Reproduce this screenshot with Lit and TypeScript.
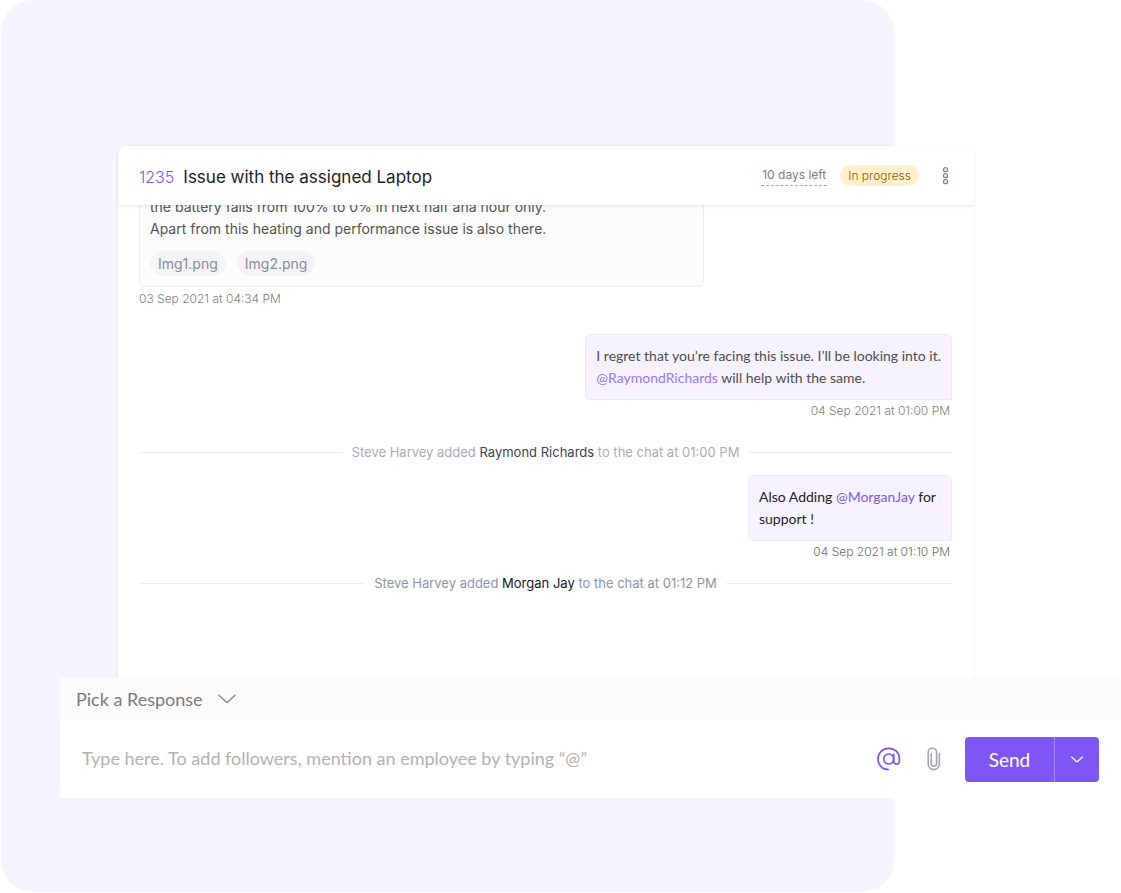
import { LitElement, html, css, svg } from "lit";
import { customElement } from "lit/decorators.js";

const chevron = svg`<path d="M1 1.2 L8.2 8 Q9 8.7 9.8 8 L17 1.2" />`;

@customElement("chat-bubble")
class ChatBubble extends LitElement {
  static properties = { time: { type: String } };
  time = "";

  static styles = css`
    :host {
      display: flex;
      flex-direction: column;
      align-items: flex-end;
      gap: 3px;
      font-family: Lato, sans-serif;
    }
    .bubble {
      box-sizing: border-box;
      min-width: 204px;
      padding: 10px;
      border: 1px solid #ebe9f3;
      border-radius: 6px 6px 0 6px;
      background: #f6f3fe;
      font-size: 14px;
      line-height: 22px;
    }
    .time {
      padding-right: 2px;
      font: 300 12px/16px Inter, sans-serif;
      color: var(--time-color, #808080);
    }
  `;

  render() {
    return html`
      <div class="bubble"><slot></slot></div>
      <time class="time">${this.time}</time>
    `;
  }
}

@customElement("chat-event")
class ChatEvent extends LitElement {
  static styles = css`
    :host {
      display: flex;
      align-items: center;
      gap: 9px;
      font: 13px/18px Inter, sans-serif;
    }
    .rule {
      flex: 1;
      height: 1px;
      background: #ededef;
    }
  `;

  render() {
    return html`<span class="rule"></span><span><slot></slot></span><span class="rule"></span>`;
  }
}

@customElement("app-root")
class AppRoot extends LitElement {
  static styles = css`
    :host {
      display: block;
      font-family: Inter, sans-serif;
      background: #fff;
    }
    .stage {
      display: grid;
      grid-template-columns: minmax(0, 1fr);
    }
    .backdrop,
    .content {
      grid-area: 1 / 1;
    }
    .backdrop {
      margin: 0 227px 1px 1px;
      border-radius: 32px;
      background: #f5f3ff;
    }
    .content {
      padding: 146px 0 95px 60px;
    }
    button,
    select,
    input {
      margin: 0;
      padding: 0;
      border: 0;
      background: none;
      font: inherit;
      color: inherit;
    }
    button {
      cursor: pointer;
    }
    svg {
      display: block;
      fill: none;
      stroke: currentColor;
    }
    a {
      text-decoration: none;
      color: #7f56f5;
    }
    .card {
      margin: 0 147px 0 58px;
      border-radius: 8px 8px 0 0;
      background: #fff;
      box-shadow: 0 0 3px rgba(40, 30, 80, 0.08);
    }
    .head {
      position: relative;
      display: flex;
      align-items: center;
      box-sizing: border-box;
      height: 59px;
      padding: 0 22px 0 21px;
      border-radius: 8px 8px 0 0;
      background: #fff;
      box-shadow: 0 2px 3px rgba(0, 0, 0, 0.07);
    }
    .number,
    .title {
      padding-top: 2px;
      line-height: 24px;
    }
    .number {
      margin-right: 9px;
      font-size: 16px;
      font-weight: 300;
      color: #7f56f5;
    }
    .title {
      flex: 1;
      margin: 0;
      font-size: 17px;
      font-weight: 400;
      color: #1d1d1f;
    }
    .due {
      padding: 0 1px 1px;
      border-bottom: 1px dashed #a3a8b4;
      font-size: 12px;
      line-height: 18px;
      color: #808080;
    }
    .status {
      margin: 0 19px 0 13px;
      padding: 0 8px;
      border-radius: 11px;
      background: #fff0c9;
      font-size: 12px;
      font-weight: 300;
      line-height: 21px;
      color: #8a5c00;
    }
    .more {
      color: #7b8599;
    }
    .thread {
      margin-top: -9px;
      padding: 0 22px 86px 21px;
    }
    .report {
      box-sizing: border-box;
      max-width: 565px;
      padding: 0 10px 10px;
      border: 1px solid #ececee;
      border-top: 0;
      border-radius: 0 0 6px 6px;
      background: #fcfcfc;
      font-size: 14px;
      line-height: 22px;
      color: #535355;
    }
    .report p {
      margin: 0;
    }
    .files {
      display: flex;
      gap: 11px;
      margin-top: 11px;
    }
    .file {
      padding: 0 8px;
      border-radius: 13px;
      background: #f4f4f6;
      line-height: 25px;
      color: #858e9d;
    }
    .sent {
      display: block;
      margin-top: 4px;
      font-size: 12px;
      font-weight: 300;
      line-height: 16px;
      color: #808080;
    }
    .first {
      margin-top: 27px;
      color: #4d4d50;
    }
    .first a {
      color: #977af4;
    }
    .second {
      margin-top: 14px;
      color: #232227;
      --time-color: #6c6c6c;
    }
    .joined {
      margin-top: 24px;
      color: #a6adba;
    }
    .joined b {
      font-weight: 400;
      color: #3f4451;
    }
    .latest {
      margin-top: 14px;
      color: #8b96a8;
    }
    .latest b {
      color: #121826;
    }
    .composer {
      position: relative;
      background: #fff;
      border-radius: 4px 4px 0 0;
      font-family: Lato, sans-serif;
      font-size: 18px;
    }
    .presets {
      display: flex;
      align-items: center;
      height: 42px;
      padding: 0 16px;
      border-radius: 4px 4px 0 0;
      background: #fbfbfb;
    }
    .picker {
      display: grid;
      align-items: center;
      justify-items: end;
      color: #7b89a3;
    }
    .picker select,
    .picker svg {
      grid-area: 1 / 1;
    }
    .picker svg {
      pointer-events: none;
    }
    .picker select {
      appearance: none;
      padding-right: 33px;
      line-height: 24px;
      color: #7b7b7b;
    }
    .entry {
      display: flex;
      align-items: center;
      height: 78px;
      padding: 0 22px;
    }
    .entry input {
      flex: 1;
      min-width: 0;
      padding-bottom: 2px;
      line-height: 24px;
      color: #444;
    }
    .entry input::placeholder {
      color: #b2b2b2;
      opacity: 1;
    }
    .mention {
      margin-right: 26px;
      color: #7f56f5;
    }
    .attach {
      margin-right: 24px;
      color: #a0a7b3;
    }
    .split {
      display: flex;
      height: 45px;
      border-radius: 4px;
      background: #7f56f5;
      color: #fff;
    }
    .send {
      width: 89px;
      font-size: 19px;
    }
    .options {
      display: grid;
      place-items: center;
      width: 45px;
      border-left: 1px solid #a488f8;
    }
  `;

  render() {
    return html`
      <main class="stage">
        <div class="backdrop"></div>
        <div class="content">
          <section class="card">
            <header class="head">
              <span class="number">1235</span>
              <h1 class="title">Issue with the assigned Laptop</h1>
              <span class="due">10 days left</span>
              <span class="status">In progress</span>
              <button class="more" aria-label="More actions">
                <svg width="14" height="18" viewBox="0 0 14 18" stroke-width="1.3">
                  <circle cx="7.5" cy="2.7" r="2" />
                  <circle cx="7.5" cy="8.7" r="2" />
                  <circle cx="7.5" cy="14.7" r="2" />
                </svg>
              </button>
            </header>
            <div class="thread">
              <div class="report">
                <p>the battery falls from 100% to 0% in next half ana hour only.</p>
                <p>Apart from this heating and performance issue is also there.</p>
                <div class="files">
                  <a class="file" href="#img1">Img1.png</a>
                  <a class="file" href="#img2">Img2.png</a>
                </div>
              </div>
              <time class="sent">03 Sep 2021 at 04:34 PM</time>
              <chat-bubble class="first" time="04 Sep 2021 at 01:00 PM"
                >I regret that you’re facing this issue. I’ll be looking into it.<br /><a href="#raymond"
                  >@RaymondRichards</a
                >
                will help with the same.</chat-bubble
              >
              <chat-event class="joined"
                >Steve Harvey added <b>Raymond Richards</b> to the chat at 01:00 PM</chat-event
              >
              <chat-bubble class="second" time="04 Sep 2021 at 01:10 PM"
                >Also Adding <a href="#morgan">@MorganJay</a> for<br />support !</chat-bubble
              >
              <chat-event class="joined latest"
                >Steve Harvey added <b>Morgan Jay</b> to the chat at 01:12 PM</chat-event
              >
            </div>
          </section>
          <section class="composer">
            <div class="presets">
              <div class="picker">
                <select aria-label="Response">
                  <option>Pick a Response</option>
                </select>
                <svg width="18" height="10" viewBox="0 0 18 10" stroke-width="1.5" stroke-linecap="round">
                  ${chevron}
                </svg>
              </div>
            </div>
            <div class="entry">
              <input
                type="text"
                aria-label="Message"
                placeholder="Type here. To add followers, mention an employee by typing “@”"
              />
              <button class="mention" aria-label="Mention">
                <svg width="24" height="24" viewBox="0 0 24 24" stroke-width="1.7" stroke-linecap="round">
                  <circle cx="11.7" cy="12" r="5" />
                  <path
                    d="M16.7 7.2 V14 C16.7 18.2 22.4 18.2 22.4 13.5 V11.5 C22.4 5.5 17.8 1.4 11.7 1.4 C5.7 1.4 1 6 1 12 C1 18 5.8 22.6 11.3 22.6"
                  />
                </svg>
              </button>
              <button class="attach" aria-label="Attach a file">
                <svg width="14" height="24" viewBox="0 0 14 24" stroke-width="1.6" stroke-linecap="round">
                  <path
                    d="M12.4 6.5 V17 A5.6 5.6 0 0 1 1.2 17 V5.4 A4.2 4.2 0 0 1 9.6 5.4 V16.6 A2.7 2.7 0 0 1 4.2 16.6 V6.5"
                  />
                </svg>
              </button>
              <div class="split">
                <button class="send">Send</button>
                <button class="options" aria-label="Send options">
                  <svg width="12" height="7" viewBox="0 0 18 10" stroke-width="1.8" stroke-linecap="round">
                    ${chevron}
                  </svg>
                </button>
              </div>
            </div>
          </section>
        </div>
      </main>
    `;
  }
}
